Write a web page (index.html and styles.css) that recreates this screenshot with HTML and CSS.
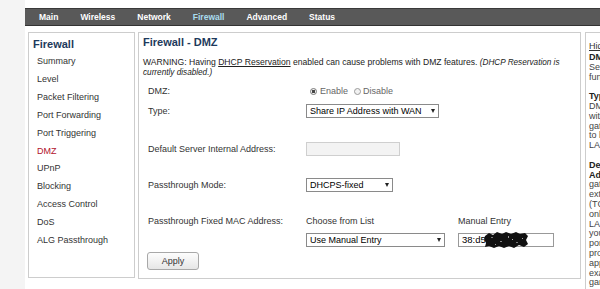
FILE: index.html
```html
<!DOCTYPE html>
<html lang="en">
  <head>
    <meta charset="UTF-8" />
    <meta name="viewport" content="width=device-width, initial-scale=1.0" />
    <title>Firewall - DMZ</title>
    <link rel="stylesheet" href="styles.css">
  </head>
  <body>
    <div class="nav">
      <a href="#">Main</a>
      <a href="#">Wireless</a>
      <a href="#">Network</a>
      <a href="#" class="active">Firewall</a>
      <a href="#">Advanced</a>
      <a href="#">Status</a>
    </div>

    <div class="page">
      <div class="sideMenu">
        <h2>Firewall</h2>
        <ul>
          <li>Summary</li>
          <li>Level</li>
          <li>Packet Filtering</li>
          <li>Port Forwarding</li>
          <li>Port Triggering</li>
          <li class="current">DMZ</li>
          <li>UPnP</li>
          <li>Blocking</li>
          <li>Access Control</li>
          <li>DoS</li>
          <li>ALG Passthrough</li>
        </ul>
      </div>

      <div class="content">
        <h1>Firewall - DMZ</h1>
        <p class="warning">WARNING: Having <a href="#">DHCP Reservation</a> enabled can cause problems with DMZ features. <em>(DHCP Reservation is currently disabled.)</em></p>

        <div class="form">
          <div class="row rowDmz">
            <span>DMZ:</span>
            <span class="radios">
              <span class="radio checked"></span>Enable
              <span class="radio second"></span>Disable
            </span>
          </div>
          <div class="row rowType">
            <span>Type:</span>
            <span class="select selectType">Share IP Address with WAN<i class="arrow"></i></span>
          </div>
          <div class="row rowServer">
            <span>Default Server Internal Address:</span>
            <span class="textBox disabled"></span>
          </div>
          <div class="row rowMode">
            <span>Passthrough Mode:</span>
            <span class="select selectMode">DHCPS-fixed<i class="arrow"></i></span>
          </div>
          <div class="row rowMac">
            <span>Passthrough Fixed MAC Address:</span>
            <span>Choose from List</span>
            <span>Manual Entry</span>
          </div>
          <div class="row rowMacInputs">
            <span></span>
            <span class="select selectMac">Use Manual Entry<i class="arrow"></i></span>
            <span class="textBox macBox">38:d5
              <svg class="scribble" width="46" height="18" viewBox="0 0 46 18">
                <path d="M2 5 L6 2 L10 4 L14 1 L19 3 L23 1 L28 3 L33 1 L37 3 L42 2 L45 5 L43 9 L45 13 L41 16 L36 14 L31 17 L26 15 L21 17 L16 15 L11 17 L6 15 L2 16 L3 12 L1 8 Z" fill="#111"/>
                <rect x="8" y="6" width="2" height="1" fill="#777"/>
                <rect x="17" y="10" width="2" height="1" fill="#888"/>
                <rect x="25" y="5" width="1" height="2" fill="#999"/>
                <rect x="33" y="11" width="2" height="1" fill="#777"/>
                <rect x="39" y="7" width="1" height="1" fill="#aaa"/>
                <rect x="12" y="13" width="1" height="1" fill="#999"/>
                <rect x="29" y="8" width="1" height="1" fill="#bbb"/>
              </svg>
            </span>
          </div>
          <button class="applyBtn">Apply</button>
        </div>
      </div>

      <div class="help">
        <p class="helpHead"><a href="#">Hide Help</a></p>
        <p><strong>DMZ:</strong><br />Set the DMZ<br />functionality on or off.</p>
        <p><strong>Type:</strong><br />DMZ type, share the IP<br />with the WAN side of the<br />gateway or forward traffic<br />to best device on the<br />LAN.</p>
        <p><strong>Default Server Internal<br />Address:</strong><br />gateway forwards all<br />external traffic<br />(TCP and UDP)<br />only to the device on the<br />LAN. This allows<br />you to open all<br />ports for<br />protocols and<br />applications, for<br />example<br />games.</p>
      </div>
    </div>
  </body>
</html>
```

FILE: styles.css
```css
* {
  margin: 0;
  padding: 0;
  box-sizing: border-box;
  font-family: "Liberation Sans", Arial, sans-serif;
}

body {
  width: 600px;
  height: 289px;
  overflow: hidden;
  padding-top: 8px;
  font-size: 9px;
  color: #333;
  background: linear-gradient(to right, #f4f4f4 25px, #fff 25px);
}

.nav {
  display: flex;
  height: 18px;
  margin-left: 25px;
  padding-left: 3px;
  background: #595959;
  border-top: 1px solid #3a3a3a;
  border-bottom: 1px solid #333;
}

.nav a {
  padding: 0 11px;
  line-height: 16px;
  font-size: 8.5px;
  font-weight: bold;
  color: #fff;
  text-decoration: none;
}

.nav a.active {
  color: #a9dcef;
}

.page {
  display: flex;
  align-items: flex-start;
  margin-top: 6px;
  padding-left: 28px;
}

/* left menu */
.sideMenu {
  flex: none;
  width: 107px;
  height: 246px;
  padding: 4px 0 0 4px;
  background: #fff;
  border: 1px solid #cdcdcd;
}

.sideMenu h2 {
  font-size: 11px;
  line-height: 14px;
  color: #1e3a5c;
}

.sideMenu ul {
  list-style: none;
  margin-top: 2px;
  padding-left: 4px;
}

.sideMenu li {
  line-height: 17.9px;
  color: #333;
}

.sideMenu li.current {
  color: #b1122c;
}

/* main panel */
.content {
  flex: none;
  width: 443px;
  height: 247px;
  margin-left: 3px;
  padding: 2px 0 0 4px;
  background: #fff;
  border: 1px solid #cdcdcd;
}

.content h1 {
  font-size: 11px;
  line-height: 14px;
  color: #1e3a5c;
}

.warning {
  margin-top: 9px;
  font-size: 8.6px;
  line-height: 9.5px;
  color: #222;
}

.warning a {
  color: #222;
}

.warning em {
  font-size: 8.2px;
}

.form {
  padding-left: 5px;
}

.row {
  display: grid;
  grid-template-columns: 158px 152px auto;
  align-items: center;
  height: 14px;
}

.rowDmz { margin-top: 7px; }
.rowType { margin-top: 6px; }
.rowServer { margin-top: 24px; }
.rowMode { margin-top: 22px; }
.rowMac { margin-top: 22px; }
.rowMacInputs { margin-top: 5px; }

.radios {
  display: flex;
  align-items: center;
  color: #666;
}

.radio {
  width: 7px;
  height: 7px;
  margin: 0 3px 0 4px;
  border: 1px solid #9a9a9a;
  border-radius: 50%;
  background: #f2f2f2;
}

.radio.second {
  margin: 0 2px 0 6px;
}

.radio.checked {
  background: radial-gradient(circle, #444 0 1.4px, #f2f2f2 1.8px);
  border-color: #777;
}

.select {
  display: flex;
  align-items: center;
  justify-content: space-between;
  height: 14px;
  padding: 0 3px;
  color: #000;
  background: #fff;
  border: 1px solid #8a8a8a;
}

.selectType { width: 133px; }
.selectMode { width: 87px; }
.selectMac { width: 139px; }

.arrow {
  width: 0;
  height: 0;
  border-left: 2.5px solid transparent;
  border-right: 2.5px solid transparent;
  border-top: 4px solid #222;
}

.textBox {
  position: relative;
  display: block;
  height: 14px;
  padding-left: 3px;
  line-height: 12px;
  color: #000;
  background: #fff;
  border: 1px solid #999;
}

.textBox.disabled {
  width: 94px;
  background: #f3f3f3;
  border-color: #cfcfcf;
}

.macBox {
  width: 96px;
  font-size: 9.5px;
}

.scribble {
  position: absolute;
  left: 24px;
  top: -3px;
}

.applyBtn {
  display: block;
  width: 52px;
  height: 18px;
  margin: 5px 0 0 -1px;
  font-size: 9px;
  color: #333;
  background: linear-gradient(#fdfdfd, #e6e6e6);
  border: 1px solid #a8a8a8;
  border-radius: 3px;
}

/* help column */
.help {
  flex: none;
  width: 150px;
  height: 262px;
  margin-left: 4px;
  padding: 8px 0 0 3px;
  background: #fff;
  border: 1px solid #cdcdcd;
  line-height: 9.8px;
  color: #444;
}

.help p {
  margin-bottom: 9.8px;
}

.help p.helpHead {
  line-height: 10px;
  margin-bottom: 2px;
}

.help a {
  color: #333;
}

.help strong {
  color: #222;
}
```
